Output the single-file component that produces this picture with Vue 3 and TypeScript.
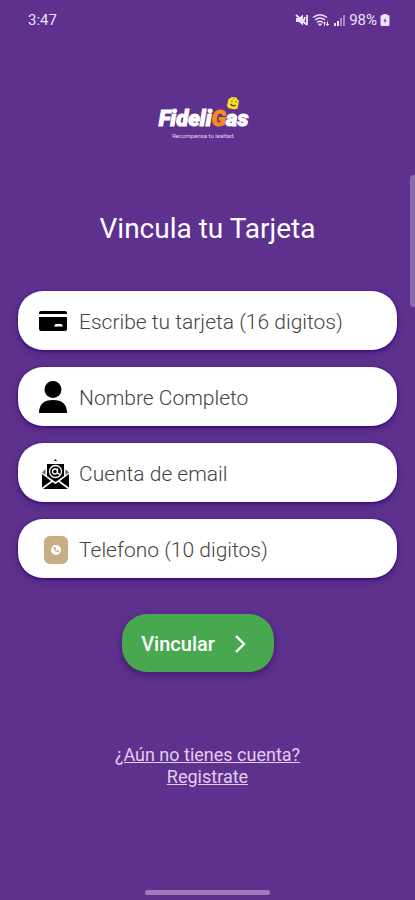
<script setup lang="ts">
import { reactive } from 'vue'

type FieldKey = 'card' | 'name' | 'email' | 'phone'

interface Field {
  key: FieldKey
  type: string
  placeholder: string
}

const fields: Field[] = [
  { key: 'card', type: 'text', placeholder: 'Escribe tu tarjeta (16 digitos)' },
  { key: 'name', type: 'text', placeholder: 'Nombre Completo' },
  { key: 'email', type: 'email', placeholder: 'Cuenta de email' },
  { key: 'phone', type: 'tel', placeholder: 'Telefono (10 digitos)' },
]

const form = reactive<Record<FieldKey, string>>({ card: '', name: '', email: '', phone: '' })
</script>

<template>
  <div class="screen">
    <header class="status">
      <span class="time">3:47</span>
      <div class="indicators">
        <svg width="14" height="14" viewBox="0 0 14 14" aria-hidden="true">
          <path d="M1 5h3l4-3.500v11L4 9H1z" fill="currentColor" />
          <path d="M1 2l11 10M12 2v10M10 4l-2 6" stroke="currentColor" stroke-width="1.800" fill="none" />
        </svg>
        <svg width="18" height="14" viewBox="0 0 18 14" fill="none" stroke="currentColor" aria-hidden="true">
          <path d="M1 4.500q7-5.500 14 0M3 7q5-4 10 0M5 9.500q3-2.500 6 0" stroke-width="1.500" />
          <path d="M6.500 11L8 12.500 9.500 11z" fill="currentColor" stroke-width="1" />
          <path d="M12.500 13V9M11 10.500l1.500-1.500 1.500 1.500M15.500 8.500v4M14 11l1.500 1.500L17 11" stroke-width="1" />
        </svg>
        <svg width="13" height="14" viewBox="0 0 13 14" fill="currentColor" aria-hidden="true">
          <path d="M1 10h2v3H1zM4 8h2v5H4z" />
          <path d="M7 5h2v8H7zM10 2h2v11h-2z" opacity=".5" />
        </svg>
        <span class="percent">98%</span>
        <svg width="10" height="14" viewBox="0 0 10 14" aria-hidden="true">
          <path d="M3 1h4v1h1q1.500 0 1.500 1.500v8Q9.500 13 8 13H2Q.5 13 .5 11.500v-8Q.5 2 2 2h1z" fill="currentColor" />
          <path d="M5.500 5L3.500 8h1.300l-.3 2.500L6.500 7.300H5.300z" fill="#5e318f" />
        </svg>
      </div>
    </header>

    <main class="content">
      <div class="brand">
        <div class="wordmark">
          <span>Fideli</span><span class="accent">G</span><span>as</span>
          <svg class="mascot" width="16" height="16" viewBox="0 0 16 16" aria-hidden="true">
            <path d="M5 2l8 1.500 1 2-1.500 7-3 1L3 12 2 9.500 3.500 3z" fill="#f8df20" />
            <path d="M6 1.500l6 1" stroke="#f8df20" stroke-width="1.500" />
            <path d="M6.500 5l1 .2M10.500 5.700l1 .2M5.500 8q2.500 3 5.500 1" stroke="#5a4718" stroke-width="1.300" fill="none" />
          </svg>
        </div>
        <p class="tagline">Recompensa tu lealtad.</p>
      </div>

      <h1 class="title">Vincula tu Tarjeta</h1>

      <form class="form" @submit.prevent>
        <label v-for="field in fields" :key="field.key" class="field">
          <svg v-if="field.key === 'card'" class="icon" viewBox="0 0 32 36" aria-hidden="true">
            <path d="M4 8h24q2 0 2 2v1H2v-1q0-2 2-2zM2 14h28v12q0 2-2 2H4q-2 0-2-2z" />
            <path d="M18.500 21h6l1.500 2.500h-9z" fill="#fff" />
          </svg>
          <svg v-else-if="field.key === 'name'" class="icon" viewBox="0 0 32 36" aria-hidden="true">
            <circle cx="16" cy="10.500" r="8.500" />
            <path d="M2 34q0-13 14-13t14 13z" />
          </svg>
          <svg v-else-if="field.key === 'email'" class="icon" viewBox="0 0 32 36" aria-hidden="true">
            <path d="M17 6h3l-1.500-2z" />
            <path d="M10 9h17v12l-8.500 6-8.500-6z" />
            <path d="M8.500 14L5 17.500l3.500 2.500zM28.500 14l3.500 3.500-3.500 2.500z" opacity=".6" />
            <path d="M5 19l9 7-9 6.500zM32 19l-9 7 9 6.500zM6 34l9.500-7 3 2 3-2 9.500 7z" />
            <circle cx="18.500" cy="16.500" r="6" fill="none" stroke="#fff" stroke-width="1.300" />
            <circle cx="18" cy="16.500" r="2.500" fill="none" stroke="#fff" stroke-width="1.300" />
            <path d="M20.500 13.500v4q.5 2 2.500 1.500" fill="none" stroke="#fff" stroke-width="1.300" />
          </svg>
          <svg v-else class="icon" viewBox="0 0 32 36" aria-hidden="true">
            <rect x="7" y="5" width="24" height="28" rx="6" fill="#c8ae84" />
            <circle cx="19" cy="19" r="5" fill="#fff" />
            <path d="M16.500 16.500q.2 4 5 5l1-1.400-1.700-1-.8.700q-1.200-.5-1.600-1.600l.7-.7-.9-1.800z" fill="#c8ae84" />
          </svg>
          <input
            v-model="form[field.key]"
            class="input"
            :type="field.type"
            :placeholder="field.placeholder"
            :aria-label="field.placeholder"
          />
        </label>

        <button class="submit" type="submit">
          <span>Vincular</span>
          <svg width="12" height="20" viewBox="0 0 12 20" aria-hidden="true">
            <path d="M2 2l8 8-8 8" fill="none" stroke="currentColor" stroke-width="2.400" />
          </svg>
        </button>
      </form>

      <a class="register" href="#registro">¿Aún no tienes cuenta?<br />Registrate</a>
    </main>

    <div class="scroll-thumb"></div>
    <div class="home-bar"></div>
  </div>
</template>

<style>
body {
  background: #5e318f;
}
</style>

<style scoped>
.screen {
  position: relative;
  display: flex;
  flex-direction: column;
  box-sizing: border-box;
  min-height: 100vh;
  padding-bottom: 5px;
  background: #5e318f;
  color: #fff;
  font-family: Roboto, "Liberation Sans", sans-serif;
}

.status {
  display: flex;
  align-items: center;
  justify-content: space-between;
  height: 40px;
  padding: 0 25px 0 28px;
  color: #eee2f6;
  font-size: 15px;
}

.indicators {
  display: flex;
  align-items: center;
  gap: 3px;
}

.percent {
  font-size: 15px;
}

.content {
  display: flex;
  flex: 1;
  flex-direction: column;
  align-items: center;
  padding: 65px 18px 0;
}

.brand {
  display: flex;
  flex-direction: column;
  align-items: center;
  padding-right: 8px;
}

.wordmark {
  position: relative;
  font-size: 22px;
  font-style: italic;
  font-weight: 900;
  line-height: 28px;
  -webkit-text-stroke: 1px currentColor;
}

.accent {
  color: #f58a20;
}

.mascot {
  position: absolute;
  top: -9px;
  right: 7px;
}

.tagline {
  margin: 0;
  color: #e4d5ef;
  font-size: 6px;
  line-height: 6px;
}

.title {
  margin: 70px 0 0;
  font-size: 28px;
  font-weight: 400;
  line-height: 40px;
}

.form {
  display: flex;
  flex-direction: column;
  align-items: center;
  gap: 17px;
  width: 100%;
  margin-top: 42px;
}

.field {
  display: flex;
  align-items: center;
  gap: 10px;
  box-sizing: border-box;
  width: 100%;
  height: 59px;
  padding: 0 19px;
  border-radius: 25px;
  background: #fff;
  box-shadow: 0 1px 3px #32007c, 0 3px 8px rgba(40, 0, 80, 0.3);
}

.icon {
  flex: none;
  width: 32px;
  height: 36px;
  fill: #000;
}

.input {
  flex: 1;
  min-width: 0;
  padding: 2px 0 0;
  border: 0;
  outline: 0;
  background: transparent;
  color: #333;
  font: 300 21px/28px Roboto, "Liberation Sans", sans-serif;
}

.input::placeholder {
  color: #444;
  opacity: 1;
}

.submit {
  display: flex;
  align-items: center;
  gap: 19px;
  height: 58px;
  margin: 19px 19px 0 0;
  padding: 2px 28px 0 19px;
  border: 0;
  border-radius: 25px;
  background: #48a84f;
  box-shadow: 0 3px 8px rgba(35, 0, 70, 0.5);
  color: #fff;
  font: 500 20px/28px Roboto, "Liberation Sans", sans-serif;
}

.register {
  margin-top: 72px;
  color: #e0cfee;
  font-size: 18px;
  line-height: 22px;
  text-align: center;
}

.scroll-thumb {
  position: absolute;
  top: 175px;
  right: 0;
  width: 5px;
  height: 132px;
  border-radius: 4px 0 0 4px;
  background: #8d6aae;
}

.home-bar {
  align-self: center;
  width: 30%;
  height: 5px;
  border-radius: 3px;
  background: #a47aba;
}
</style>
